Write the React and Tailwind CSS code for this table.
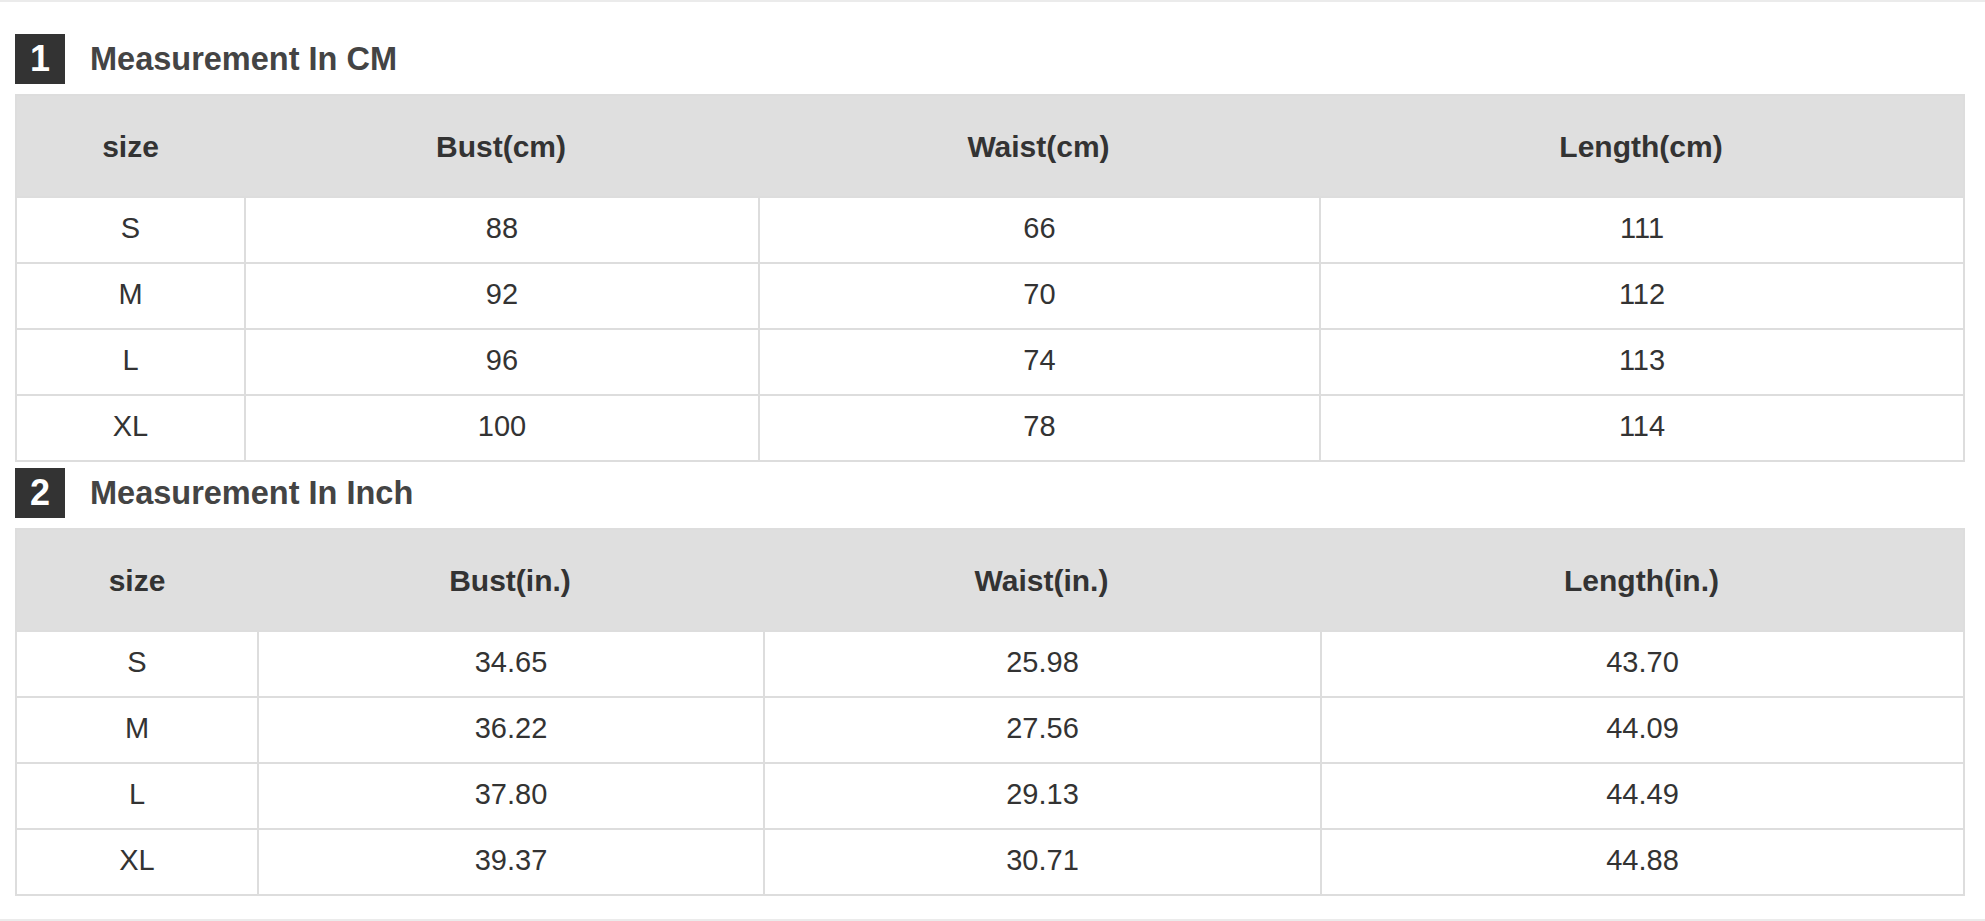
import React from "react";

const font = { fontFamily: '"Liberation Sans", Arial, Helvetica, sans-serif' };

const tables = [
  {
    num: "1",
    title: "Measurement In CM",
    cols: "grid-cols-[227px_514px_561px_644px]",
    head: ["size", "Bust(cm)", "Waist(cm)", "Length(cm)"],
    rows: [
      ["S", "88", "66", "111"],
      ["M", "92", "70", "112"],
      ["L", "96", "74", "113"],
      ["XL", "100", "78", "114"],
    ],
    mt: "mt-[32px]",
  },
  {
    num: "2",
    title: "Measurement In Inch",
    cols: "grid-cols-[240px_506px_557px_643px]",
    head: ["size", "Bust(in.)", "Waist(in.)", "Length(in.)"],
    rows: [
      ["S", "34.65", "25.98", "43.70"],
      ["M", "36.22", "27.56", "44.09"],
      ["L", "37.80", "29.13", "44.49"],
      ["XL", "39.37", "30.71", "44.88"],
    ],
    mt: "mt-[6px]",
  },
];

function Section({ t }) {
  return (
    <div className={t.mt}>
      <div className="flex items-center ml-[15px] h-[50px]">
        <div className="w-[50px] h-[50px] bg-[#333333] text-white font-bold text-[36px] flex items-center justify-center leading-none">
          {t.num}
        </div>
        <div className="ml-[25px] text-[32.5px] font-bold text-[#444444] leading-none">
          {t.title}
        </div>
      </div>
      <div className="mt-[10px] ml-[15px] w-[1950px] border-2 border-[#dddddd]">
        <div className={`grid ${t.cols} h-[100px] bg-[#dfdfdf]`}>
          {t.head.map((h, i) => (
            <div
              key={i}
              className="flex items-center justify-center text-[30px] font-bold text-[#333333]"
            >
              {h}
            </div>
          ))}
        </div>
        {t.rows.map((r, ri) => (
          <div key={ri} className={`grid ${t.cols} h-[66px] border-t-2 border-[#dddddd]`}>
            {r.map((c, ci) => (
              <div
                key={ci}
                className={`flex items-center justify-center pb-[3px] text-[29px] text-[#333333] ${
                  ci > 0 ? "border-l-2 border-[#dddddd]" : ""
                }`}
              >
                {c}
              </div>
            ))}
          </div>
        ))}
      </div>
    </div>
  );
}

export default function App() {
  return (
    <div className="w-[1985px] h-[921px] bg-white flex flex-col border-t-2 border-b-2 border-[#ebebeb] box-border" style={font}>
      {tables.map((t, i) => (
        <Section key={i} t={t} />
      ))}
    </div>
  );
}
